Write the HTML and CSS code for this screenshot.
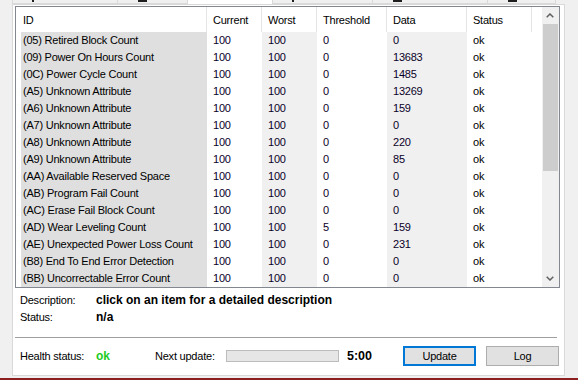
FILE: index.html
```html
<!DOCTYPE html>
<html>
  <head>
    <meta name="viewport" content="width=device-width, initial-scale=1.0">
    <title>SMART attributes</title>
    <link rel="stylesheet" href="styles.css">
  </head>
  <body>

    <div class="tabs">
      <div class="tab tab-1"><span class="tab-mark mark-small"></span></div>
      <div class="tab tab-2"><span class="tab-mark mark-wide"></span></div>
      <div class="tab tab-3 tab-selected"></div>
      <div class="tab tab-4"><span class="tab-mark mark-small"></span></div>
      <div class="tab tab-5"><span class="tab-mark mark-wide"></span></div>
      <div class="tab tab-6"><span class="tab-mark mark-wide"></span></div>
    </div>

    <div class="page">

      <div class="list">
        <div class="list-main">
          <div class="list-header">
            <div class="col-pad"></div>
            <div class="head col-id">ID</div>
            <div class="head col-current">Current</div>
            <div class="head col-worst">Worst</div>
            <div class="head col-threshold">Threshold</div>
            <div class="head col-data">Data</div>
            <div class="head col-status">Status</div>
          </div>
          <div id="rows" class="list-rows"></div>
        </div>
        <div class="scrollbar">
          <div class="scroll-arrow">
            <svg width="8" height="5" viewBox="0 0 8 5"><path d="M0.7 4.3 L4 1 L7.3 4.3" fill="none" stroke="#606060" stroke-width="1.5"/></svg>
          </div>
          <div class="scroll-track">
            <div class="scroll-thumb"></div>
          </div>
          <div class="scroll-arrow">
            <svg width="8" height="5" viewBox="0 0 8 5"><path d="M0.7 0.7 L4 4 L7.3 0.7" fill="none" stroke="#606060" stroke-width="1.5"/></svg>
          </div>
        </div>
      </div>

      <div class="info">
        <div class="info-row">
          <div class="info-label">Description:</div>
          <div class="info-value">click on an item for a detailed description</div>
        </div>
        <div class="info-row">
          <div class="info-label">Status:</div>
          <div class="info-value">n/a</div>
        </div>
      </div>

      <div class="separator"></div>

      <div class="footer">
        <div class="info-label">Health status:</div>
        <div class="health">ok</div>
        <div class="next-label">Next update:</div>
        <div class="progress"></div>
        <div class="countdown">5:00</div>
        <button class="button button-focused">Update</button>
        <button class="button">Log</button>
      </div>

    </div>

    <div class="taskbar-edge"></div>

    <script>

      let attributes = [
        ["(05) Retired Block Count", 100, 100, 0, 0],
        ["(09) Power On Hours Count", 100, 100, 0, 13683],
        ["(0C) Power Cycle Count", 100, 100, 0, 1485],
        ["(A5) Unknown Attribute", 100, 100, 0, 13269],
        ["(A6) Unknown Attribute", 100, 100, 0, 159],
        ["(A7) Unknown Attribute", 100, 100, 0, 0],
        ["(A8) Unknown Attribute", 100, 100, 0, 220],
        ["(A9) Unknown Attribute", 100, 100, 0, 85],
        ["(AA) Available Reserved Space", 100, 100, 0, 0],
        ["(AB) Program Fail Count", 100, 100, 0, 0],
        ["(AC) Erase Fail Block Count", 100, 100, 0, 0],
        ["(AD) Wear Leveling Count", 100, 100, 5, 159],
        ["(AE) Unexpected Power Loss Count", 100, 100, 0, 231],
        ["(B8) End To End Error Detection", 100, 100, 0, 0],
        ["(BB) Uncorrectable Error Count", 100, 100, 0, 0]
      ];

      let rows = document.getElementById("rows");

      attributes.forEach(function(attr) {
        let row = document.createElement("div");
        row.className = "row";
        row.innerHTML =
          `<div class="col-pad"></div>` +
          `<div class="cell col-id">${attr[0]}</div>` +
          `<div class="cell col-current">${attr[1]}</div>` +
          `<div class="cell col-worst">${attr[2]}</div>` +
          `<div class="cell col-threshold">${attr[3]}</div>` +
          `<div class="cell col-data">${attr[4]}</div>` +
          `<div class="cell col-status">ok</div>`;
        rows.appendChild(row);
      });

    </script>

  </body>
</html>
```

FILE: styles.css
```css
* {
  font-family: "Liberation Sans", Arial, sans-serif;
  box-sizing: border-box;
}

body {
  margin: 0px;
  padding: 0px;
  width: 578px;
  height: 380px;
  overflow: hidden;
  background-color: rgb(240, 240, 240);
  font-size: 11px;
  letter-spacing: -0.22px;
  color: rgb(0, 0, 0);
}

/* tab strip, cut off at the top */

.tabs {
  display: flex;
  height: 4px;
  padding-left: 12px;
}

.tab {
  display: flex;
  align-items: flex-end;
  height: 4px;
  background-color: rgb(240, 240, 240);
  border: 1px solid rgb(217, 217, 217);
  border-top: none;
  border-left: none;
}

.tab-1 { width: 106px; border-left: 1px solid rgb(217, 217, 217); }
.tab-2 { width: 70px; }
.tab-3 { width: 85px; }
.tab-4 { width: 100px; }
.tab-5 { width: 115px; }
.tab-6 { width: 68px; }

.tab-selected {
  background-color: rgb(255, 255, 255);
  border-bottom: none;
}

.tab-mark {
  height: 2px;
  margin-bottom: 1px;
  background-color: rgb(30, 30, 30);
}

.mark-small {
  width: 2px;
  margin-left: 19px;
}

.mark-wide {
  width: 9px;
  margin-left: 20px;
}

/* white tab page */

.page {
  margin-left: 12px;
  width: 553px;
  height: 372px;
  padding: 1px 0px 0px 2px;
  background-color: rgb(255, 255, 255);
  border: 1px solid rgb(217, 217, 217);
  display: flex;
  flex-direction: column;
}

/* list view */

.list {
  display: flex;
  width: 545px;
  height: 282px;
  border: 1px solid rgb(130, 135, 144);
}

.list-main {
  width: 526px;
  overflow: hidden;
}

.list-header {
  display: flex;
  height: 25px;
}

.head {
  display: flex;
  align-items: center;
  padding-left: 6px;
  border-right: 1px solid rgb(229, 229, 229);
  color: rgb(0, 0, 0);
}

.list-header .col-pad {
  width: 1px;
}

.list-header .col-id {
  width: 190px;
  padding-left: 6px;
}

.row {
  display: flex;
  height: 17px;
  line-height: 17px;
}

.col-pad {
  width: 5px;
  flex-shrink: 0;
}

.cell {
  padding-left: 6px;
  white-space: nowrap;
  color: rgb(10, 0, 40);
}

.row .col-id {
  width: 186px;
  padding-left: 2px;
  background-color: rgb(223, 223, 223);
  color: rgb(0, 0, 0);
}

.col-current { width: 55px; }
.col-worst { width: 55px; }
.col-threshold { width: 70px; }
.col-data { width: 80px; }
.col-status { width: 65px; }

.row .col-worst,
.row .col-data {
  background-color: rgb(240, 240, 240);
}

.row .col-status {
  color: rgb(0, 0, 0);
}

/* scrollbar */

.scrollbar {
  display: flex;
  flex-direction: column;
  width: 17px;
  background-color: rgb(240, 240, 240);
}

.scroll-arrow {
  display: flex;
  justify-content: center;
  align-items: center;
  height: 17px;
  padding-right: 1px;
}

.scroll-track {
  flex-grow: 1;
}

.scroll-thumb {
  margin-left: 1px;
  width: 15px;
  height: 147px;
  background-color: rgb(205, 205, 205);
}

/* description area */

.info {
  margin-top: 4px;
  padding-left: 5px;
}

.info-row {
  display: flex;
  height: 17px;
  line-height: 17px;
}

.info-label {
  width: 76px;
  flex-shrink: 0;
}

.info-value {
  font-size: 12px;
  font-weight: bold;
  letter-spacing: 0px;
}

.separator {
  margin-top: 11px;
  width: 542px;
  height: 1px;
  background-color: rgb(160, 160, 160);
}

/* bottom bar */

.footer {
  display: flex;
  align-items: center;
  height: 20px;
  margin-top: 8px;
  padding-left: 5px;
}

.health {
  width: 59px;
  font-size: 12px;
  font-weight: bold;
  letter-spacing: 0px;
  color: rgb(34, 204, 34);
}

.next-label {
  width: 71px;
}

.progress {
  width: 113px;
  height: 12px;
  background-color: rgb(230, 230, 230);
  border: 1px solid rgb(188, 188, 188);
}

.countdown {
  width: 64px;
  padding-left: 8px;
  font-size: 12.5px;
  font-weight: bold;
  letter-spacing: 0px;
}

.button {
  width: 73px;
  height: 20px;
  padding: 0px;
  font-size: 11px;
  letter-spacing: -0.22px;
  color: rgb(0, 0, 0);
  background-color: rgb(225, 225, 225);
  border: 1px solid rgb(173, 173, 173);
  border-radius: 0px;
}

.button + .button {
  margin-left: 10px;
}

.button-focused {
  border: 2px solid rgb(0, 120, 215);
}

.taskbar-edge {
  margin-top: 2px;
  height: 3px;
  background-color: rgb(140, 32, 32);
}
```
